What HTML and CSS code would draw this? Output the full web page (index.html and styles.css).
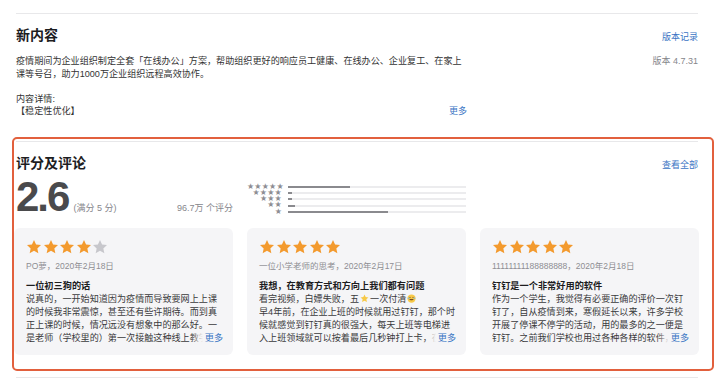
FILE: index.html
```html
<!DOCTYPE html>
<html lang="zh-CN">
<head>
  <meta charset="UTF-8">
  <meta name="viewport" content="width=device-width, initial-scale=1.0">
  <title>钉钉 - 新内容与评论</title>
  <link rel="stylesheet" href="styles.css">
</head>
<body>
  <div class="page">
    <section class="section">
      <div class="section-head">
        <h2>新内容</h2>
        <a class="link" href="#">版本记录</a>
      </div>
      <div class="notes">
        <div class="notes-text">
          <p>疫情期间为企业组织制定全套「在线办公」方案，帮助组织更好的响应员工健康、在线办公、企业复工、在家上课等号召，助力1000万企业组织远程高效协作。</p>
          <p class="detail">内容详情:</p>
          <div class="detail-row">
            <span>【稳定性优化】</span>
            <a class="link" href="#">更多</a>
          </div>
        </div>
        <div class="version">版本 4.7.31</div>
      </div>
    </section>

    <div class="highlight">
      <section class="section">
        <div class="section-head">
          <h2>评分及评论</h2>
          <a class="link" href="#">查看全部</a>
        </div>

        <div class="summary">
          <div class="score">
            <span class="score-num">2.6</span>
            <span class="score-max">(满分 5 分)</span>
            <span class="score-count">96.7万 个评分</span>
          </div>
          <div class="histogram">
            <span class="hist-stars">★★★★★</span><span class="hist-bar"><i style="width: 35%"></i></span>
            <span class="hist-stars">★★★★</span><span class="hist-bar"><i style="width: 2%"></i></span>
            <span class="hist-stars">★★★</span><span class="hist-bar"><i style="width: 2%"></i></span>
            <span class="hist-stars">★★</span><span class="hist-bar"><i style="width: 4%"></i></span>
            <span class="hist-stars">★</span><span class="hist-bar"><i style="width: 56%"></i></span>
          </div>
        </div>

        <div class="reviews">
          <div class="card">
            <div class="stars">
              <svg viewBox="0 0 24 24"><polygon points="12,1.5 15.1,8.3 22.5,9.1 17,14.1 18.5,21.5 12,17.8 5.5,21.5 7,14.1 1.5,9.1 8.9,8.3"/></svg>
              <svg viewBox="0 0 24 24"><polygon points="12,1.5 15.1,8.3 22.5,9.1 17,14.1 18.5,21.5 12,17.8 5.5,21.5 7,14.1 1.5,9.1 8.9,8.3"/></svg>
              <svg viewBox="0 0 24 24"><polygon points="12,1.5 15.1,8.3 22.5,9.1 17,14.1 18.5,21.5 12,17.8 5.5,21.5 7,14.1 1.5,9.1 8.9,8.3"/></svg>
              <svg viewBox="0 0 24 24"><polygon points="12,1.5 15.1,8.3 22.5,9.1 17,14.1 18.5,21.5 12,17.8 5.5,21.5 7,14.1 1.5,9.1 8.9,8.3"/></svg>
              <svg class="off" viewBox="0 0 24 24"><polygon points="12,1.5 15.1,8.3 22.5,9.1 17,14.1 18.5,21.5 12,17.8 5.5,21.5 7,14.1 1.5,9.1 8.9,8.3"/></svg>
            </div>
            <div class="author">PO萝，2020年2月18日</div>
            <div class="title">一位初三狗的话</div>
            <div class="body">
              <p>说真的，一开始知道因为疫情而导致要网上上课的时候我非常震惊，甚至还有些许期待。而到真正上课的时候，情况远没有想象中的那么好。一是老师（学校里的）第一次接触这种线上教学，很多操作都不熟练。</p>
              <a class="more" href="#">更多</a>
            </div>
          </div>

          <div class="card">
            <div class="stars">
              <svg viewBox="0 0 24 24"><polygon points="12,1.5 15.1,8.3 22.5,9.1 17,14.1 18.5,21.5 12,17.8 5.5,21.5 7,14.1 1.5,9.1 8.9,8.3"/></svg>
              <svg viewBox="0 0 24 24"><polygon points="12,1.5 15.1,8.3 22.5,9.1 17,14.1 18.5,21.5 12,17.8 5.5,21.5 7,14.1 1.5,9.1 8.9,8.3"/></svg>
              <svg viewBox="0 0 24 24"><polygon points="12,1.5 15.1,8.3 22.5,9.1 17,14.1 18.5,21.5 12,17.8 5.5,21.5 7,14.1 1.5,9.1 8.9,8.3"/></svg>
              <svg viewBox="0 0 24 24"><polygon points="12,1.5 15.1,8.3 22.5,9.1 17,14.1 18.5,21.5 12,17.8 5.5,21.5 7,14.1 1.5,9.1 8.9,8.3"/></svg>
              <svg viewBox="0 0 24 24"><polygon points="12,1.5 15.1,8.3 22.5,9.1 17,14.1 18.5,21.5 12,17.8 5.5,21.5 7,14.1 1.5,9.1 8.9,8.3"/></svg>
            </div>
            <div class="author">一位小学老师的思考，2020年2月17日</div>
            <div class="title">我想，在教育方式和方向上我们都有问题</div>
            <div class="body">
              <p>看完视频，白嫖失败，五<svg class="emoji" viewBox="0 0 24 24"><polygon fill="#f7c948" points="12,1.5 15.1,8.3 22.5,9.1 17,14.1 18.5,21.5 12,17.8 5.5,21.5 7,14.1 1.5,9.1 8.9,8.3"/></svg>一次付清<svg class="emoji" viewBox="0 0 24 24"><circle cx="12" cy="12" r="11" fill="#f7c948"/><path d="M6 13c1.5 5 10.5 5 12 0z" fill="#7a4a1a"/><path d="M6 9.5q2-2 4 0M14 9.5q2-2 4 0" stroke="#7a4a1a" stroke-width="1.6" fill="none"/><circle cx="4.5" cy="11" r="2" fill="#6cb8f0"/><circle cx="19.5" cy="11" r="2" fill="#6cb8f0"/></svg><br>早4年前，在企业上班的时候就用过钉钉，那个时候就感觉到钉钉真的很强大，每天上班等电梯进入上班领域就可以按着最后几秒钟打上卡，在家也能随时处理工作。</p>
              <a class="more" href="#">更多</a>
            </div>
          </div>

          <div class="card">
            <div class="stars">
              <svg viewBox="0 0 24 24"><polygon points="12,1.5 15.1,8.3 22.5,9.1 17,14.1 18.5,21.5 12,17.8 5.5,21.5 7,14.1 1.5,9.1 8.9,8.3"/></svg>
              <svg viewBox="0 0 24 24"><polygon points="12,1.5 15.1,8.3 22.5,9.1 17,14.1 18.5,21.5 12,17.8 5.5,21.5 7,14.1 1.5,9.1 8.9,8.3"/></svg>
              <svg viewBox="0 0 24 24"><polygon points="12,1.5 15.1,8.3 22.5,9.1 17,14.1 18.5,21.5 12,17.8 5.5,21.5 7,14.1 1.5,9.1 8.9,8.3"/></svg>
              <svg viewBox="0 0 24 24"><polygon points="12,1.5 15.1,8.3 22.5,9.1 17,14.1 18.5,21.5 12,17.8 5.5,21.5 7,14.1 1.5,9.1 8.9,8.3"/></svg>
              <svg viewBox="0 0 24 24"><polygon points="12,1.5 15.1,8.3 22.5,9.1 17,14.1 18.5,21.5 12,17.8 5.5,21.5 7,14.1 1.5,9.1 8.9,8.3"/></svg>
            </div>
            <div class="author">11111111188888888，2020年2月18日</div>
            <div class="title">钉钉是一个非常好用的软件</div>
            <div class="body">
              <p>作为一个学生，我觉得有必要正确的评价一次钉钉了，自从疫情到来，寒假延长以来，许多学校开展了停课不停学的活动，用的最多的之一便是钉钉。之前我们学校也用过各种各样的软件，但是都不太好用。</p>
              <a class="more" href="#">更多</a>
            </div>
          </div>
        </div>
      </section>
    </div>

    <section class="section next"></section>
  </div>
</body>
</html>
```

FILE: styles.css
```css
body {
  margin: 0;
  background: #ffffff;
  color: #333333;
  font-family: "Liberation Sans", "Noto Sans CJK SC", sans-serif;
}

.page {
  padding: 13px 22px 0 16px;
}

.section {
  border-top: 1px solid #e8e8ea;
}

.section-head {
  display: flex;
  justify-content: space-between;
  align-items: baseline;
  padding-top: 13px;
}

h2 {
  margin: 0;
  font-size: 14px;
  line-height: 16px;
  font-weight: 700;
  color: #1d1d1f;
}

.link {
  font-size: 9px;
  color: #3a75c4;
  text-decoration: none;
}

.notes {
  display: flex;
  justify-content: space-between;
  margin-top: 12px;
  font-size: 9.1px;
  line-height: 12.5px;
}

.notes-text {
  width: 451px;
}

.notes p {
  margin: 0 0 12.5px;
}

.notes p.detail {
  margin: 0;
}

.detail-row {
  display: flex;
  justify-content: space-between;
}

.version {
  color: #86868b;
  font-size: 9px;
}

.highlight {
  margin: 19px -16px 0 -4px;
  border: 2px solid #e2603d;
  border-radius: 5px;
  padding: 2px 14px 14px 2px;
}

.summary,
.reviews {
  display: grid;
  grid-template-columns: repeat(3, 1fr);
  column-gap: 14px;
  margin-left: -2px;
  margin-right: -1px;
}

.summary {
  margin-top: 5px;
}

.score {
  display: flex;
  align-items: baseline;
  padding-left: 2px;
}

.score-num {
  font-size: 42px;
  line-height: 42px;
  font-weight: 700;
  letter-spacing: -2px;
  color: #4a4a4c;
}

.score-max {
  margin-left: 5px;
  font-size: 9px;
  color: #86868b;
}

.score-count {
  margin-left: auto;
  font-size: 9px;
  color: #86868b;
}

.histogram {
  display: grid;
  grid-template-columns: 35px 1fr;
  grid-auto-rows: 6.3px;
  column-gap: 6px;
  align-items: center;
  margin-top: 8px;
}

.hist-stars {
  text-align: right;
  font-family: "DejaVu Sans", sans-serif;
  font-size: 8px;
  line-height: 6.3px;
  letter-spacing: 0.2px;
  color: #8e8e93;
}

.hist-bar {
  display: block;
  height: 2px;
  background: #ececee;
}

.hist-bar i {
  display: block;
  height: 100%;
  background: #8a8a8e;
}

.reviews {
  margin-top: 10px;
}

.card {
  background: #f5f5f7;
  border-radius: 6px;
  padding: 11px 8px 10px 12px;
}

.stars {
  display: flex;
  gap: 0.6px;
  height: 16px;
}

.stars svg {
  width: 16px;
  height: 16px;
  fill: #f39a2e;
}

.stars svg.off {
  fill: #c7c7cc;
}

.author {
  margin-top: 5px;
  font-size: 8.5px;
  line-height: 12px;
  color: #8e8e93;
}

.title {
  margin-top: 8px;
  font-size: 9.2px;
  line-height: 13px;
  font-weight: 700;
  color: #1d1d1f;
}

.body {
  position: relative;
  max-height: 52px;
  overflow: hidden;
  font-size: 9.1px;
  line-height: 13px;
  color: #3a3a3c;
}

.body p {
  margin: 0;
}

.emoji {
  width: 9px;
  height: 9px;
  margin: 0 1px;
  vertical-align: -1px;
}

.more {
  position: absolute;
  right: 2px;
  bottom: 0;
  padding-left: 14px;
  line-height: 13px;
  color: #3a75c4;
  text-decoration: none;
  background: linear-gradient(90deg, rgba(245, 245, 247, 0), #f5f5f7 12px);
}

.next {
  margin-top: 6px;
  height: 20px;
}
```
